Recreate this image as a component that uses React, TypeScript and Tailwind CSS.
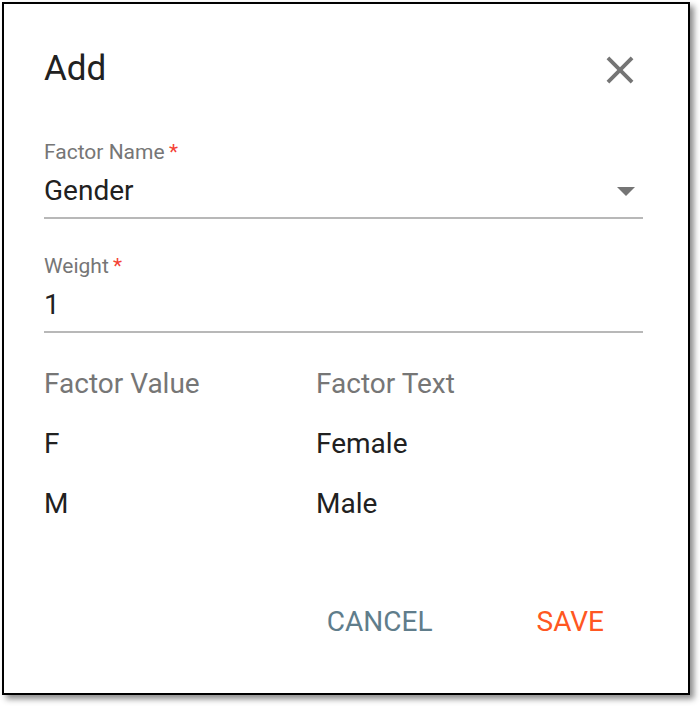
import React from 'react';

const rows = [
    { value: 'F', text: 'Female' },
    { value: 'M', text: 'Male' },
];

const Field: React.FC<{ label: string; value: string; select?: boolean }> = ({ label, value, select }) => (
    <div className="flex flex-col border-b-2 border-[#b8b8b8] pb-[8px]">
        <div className="h-[24px] leading-[24px] text-[21px] text-[#767676]">
            {label}
            <span className="text-[#f44336]">&thinsp;*</span>
        </div>
        <div className="mt-[9px] h-[36px] flex items-center justify-between">
            <span className="text-[28px] leading-[36px] text-[#212121]">{value}</span>
            {select && (
                <svg width="18" height="9" viewBox="0 0 18 9" className="mr-[8px]">
                    <path d="M0 0 L9 9 L18 0 Z" fill="#757575" />
                </svg>
            )}
        </div>
    </div>
);

export default function App() {
    return (
        <div className="w-[700px] h-[706px] bg-white font-['Roboto',sans-serif]">
            <div className="ml-[2px] mt-[2px] w-[688px] h-[693px] border-2 border-black bg-white shadow-[4px_4px_6px_rgba(0,0,0,0.45)] flex flex-col pt-[36px] pl-[40px] pr-[45px] pb-[39px]">
                {/* header */}
                <div className="h-[60px] flex items-center justify-between">
                    <h2 className="-mt-[4px] text-[35px] font-normal text-[#212121] leading-none">Add</h2>
                    <svg width="46" height="46" viewBox="0 0 24 24" className="-mt-[1px]">
                        <path
                            d="M19 6.41L17.59 5 12 10.59 6.41 5 5 6.41 10.59 12 5 17.59 6.41 19 12 13.41 17.59 19 19 17.59 13.41 12z"
                            fill="#757575"
                        />
                    </svg>
                </div>

                <div className="mt-[40px]">
                    <Field label="Factor Name" value="Gender" select />
                </div>
                <div className="mt-[35px]">
                    <Field label="Weight" value="1" />
                </div>

                {/* factor table */}
                <div className="mt-[21px] grid grid-cols-[272px_1fr] auto-rows-[60px] items-center text-[28px]">
                    <div className="text-[#767676]">Factor Value</div>
                    <div className="text-[#767676]">Factor Text</div>
                    {rows.map(r => (
                        <React.Fragment key={r.value}>
                            <div className="text-[#212121]">{r.value}</div>
                            <div className="text-[#212121]">{r.text}</div>
                        </React.Fragment>
                    ))}
                </div>

                {/* actions */}
                <div className="mt-[57px] h-[63px] flex items-center justify-end pr-[25px]">
                    <button className="-mt-[2px] h-full px-[14px] text-[28px] uppercase text-[#607d8b]">Cancel</button>
                    <button className="-mt-[2px] ml-[76px] h-full px-[14px] text-[28px] uppercase text-[#ff5722]">Save</button>
                </div>
            </div>
        </div>
    );
}
